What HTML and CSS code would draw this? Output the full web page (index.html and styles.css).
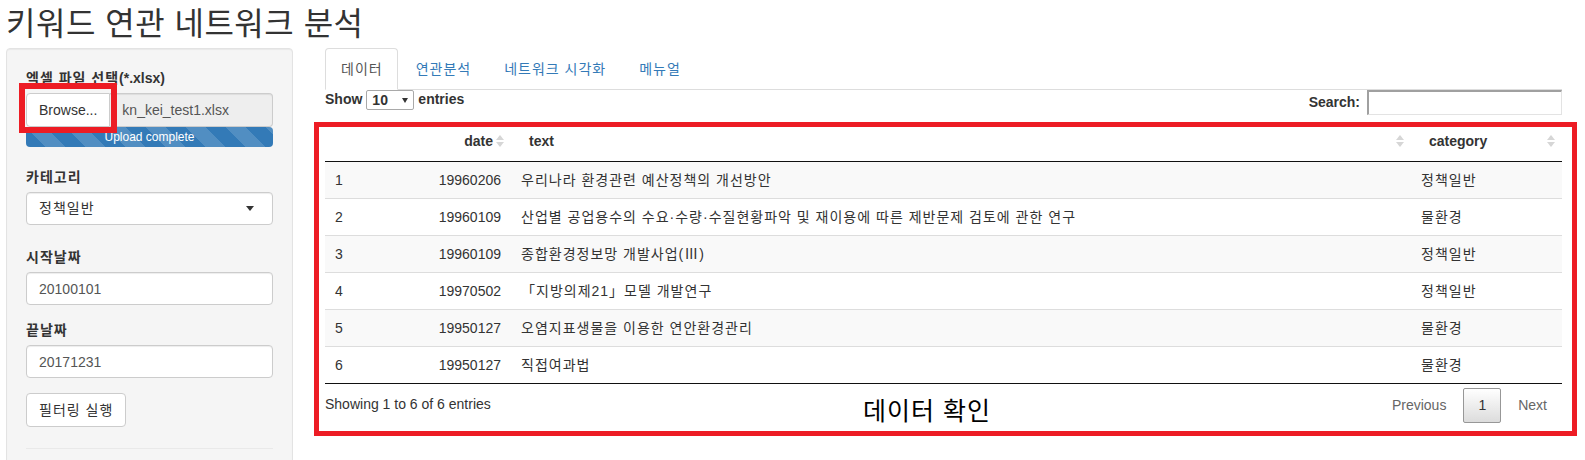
FILE: index.html
```html
<!DOCTYPE html>
<html lang="ko">
<head>
<meta charset="utf-8">
<title>키워드 연관 네트워크 분석</title>
<link rel="stylesheet" href="styles.css">
</head>
<body>
<div class="page">
  <h2 class="title">키워드 연관 네트워크 분석</h2>
  <div class="layout">
    <aside class="well">
      <div class="form-group file-group">
        <label class="control-label"><span class="ko">엑셀 파일 선택</span>(*.xlsx)</label>
        <div class="input-group">
          <span class="btn btn-browse">Browse...</span>
          <input class="form-control readonly" type="text" value="kn_kei_test1.xlsx" readonly>
          <span class="mark mark-browse"></span>
        </div>
        <div class="progress"><div class="progress-bar">Upload complete</div></div>
      </div>
      <div class="form-group select-group">
        <label class="control-label ko">카테고리</label>
        <div class="selectize"><span class="ko">정책일반</span><span class="caret"></span></div>
      </div>
      <div class="form-group">
        <label class="control-label ko">시작날짜</label>
        <input class="form-control" type="text" value="20100101">
      </div>
      <div class="form-group">
        <label class="control-label ko">끝날짜</label>
        <input class="form-control" type="text" value="20171231">
      </div>
      <button class="btn btn-filter ko" type="button">필터링 실행</button>
      <hr class="divider">
    </aside>
    <main class="main">
      <ul class="nav-tabs">
        <li class="tab active"><a class="tab-link ko" href="#">데이터</a></li>
        <li class="tab"><a class="tab-link ko" href="#">연관분석</a></li>
        <li class="tab"><a class="tab-link ko" href="#">네트워크 시각화</a></li>
        <li class="tab"><a class="tab-link ko" href="#">메뉴얼</a></li>
      </ul>
      <div class="dt-wrap">
        <div class="dt-top">
          <div class="dt-length">Show <span class="len-select"><span>10</span><span class="len-caret"></span></span> entries</div>
          <div class="dt-filter">Search:<input class="dt-search" type="search"></div>
        </div>
        <table class="dt">
          <colgroup>
            <col class="c-idx"><col class="c-date"><col><col class="c-cat">
          </colgroup>
          <thead>
            <tr>
              <th class="th"></th>
              <th class="th right">date<svg class="sort" viewBox="0 0 8 14"><path d="M0 6L4 1L8 6Z"/><path d="M0 8L8 8L4 13Z"/></svg></th>
              <th class="th">text<svg class="sort" viewBox="0 0 8 14"><path d="M0 6L4 1L8 6Z"/><path d="M0 8L8 8L4 13Z"/></svg></th>
              <th class="th">category<svg class="sort" viewBox="0 0 8 14"><path d="M0 6L4 1L8 6Z"/><path d="M0 8L8 8L4 13Z"/></svg></th>
            </tr>
          </thead>
          <tbody>
            <tr class="row"><td class="td">1</td><td class="td right">19960206</td><td class="td ko">우리나라 환경관련 예산정책의 개선방안</td><td class="td ko">정책일반</td></tr>
            <tr class="row"><td class="td">2</td><td class="td right">19960109</td><td class="td ko">산업별 공업용수의 수요·수량·수질현황파악 및 재이용에 따른 제반문제 검토에 관한 연구</td><td class="td ko">물환경</td></tr>
            <tr class="row"><td class="td">3</td><td class="td right">19960109</td><td class="td ko">종합환경정보망 개발사업(Ⅲ)</td><td class="td ko">정책일반</td></tr>
            <tr class="row"><td class="td">4</td><td class="td right">19970502</td><td class="td ko">「지방의제21」모델 개발연구</td><td class="td ko">정책일반</td></tr>
            <tr class="row"><td class="td">5</td><td class="td right">19950127</td><td class="td ko">오염지표생물을 이용한 연안환경관리</td><td class="td ko">물환경</td></tr>
            <tr class="row"><td class="td">6</td><td class="td right">19950127</td><td class="td ko">직접여과법</td><td class="td ko">물환경</td></tr>
          </tbody>
        </table>
        <div class="dt-bottom">
          <div class="dt-info">Showing 1 to 6 of 6 entries</div>
          <div class="dt-paginate">
            <span class="pg disabled">Previous</span>
            <span class="pg current">1</span>
            <span class="pg disabled">Next</span>
          </div>
        </div>
        <div class="mark mark-table"></div>
        <div class="caption">데이터 확인</div>
      </div>
    </main>
  </div>
</div>
</body>
</html>
```
FILE: styles.css
```css
* { box-sizing: border-box; }
html, body { margin: 0; padding: 0; }
body {
  font-family: "Liberation Sans", "Noto Sans CJK KR", sans-serif;
  font-size: 14px;
  line-height: 1.42857;
  color: #333;
  background: #fff;
}
.ko { letter-spacing: 1px; }
.page {
  height: 460px;
  overflow: hidden;
  padding: 0 23px 0 6px;
}
.title {
  margin: 0;
  height: 48px;
  padding-top: 4px;
  font-size: 32px;
  line-height: 40px;
  font-weight: 400;
  letter-spacing: 0.5px;
  color: #333;
}
.layout {
  display: flex;
  gap: 32px;
  align-items: flex-start;
}
.well {
  flex: 0 0 287px;
  width: 287px;
  min-width: 0;
  min-height: 460px;
  padding: 19px;
  background: #f5f5f5;
  border: 1px solid #e3e3e3;
  border-radius: 4px;
  box-shadow: inset 0 1px 1px rgba(0,0,0,.05);
}
.main { flex: 1 1 auto; min-width: 0; }

.control-label {
  display: block;
  font-weight: 700;
  margin-bottom: 5px;
  line-height: 20px;
}
.form-group { margin-bottom: 15px; }
.file-group { margin-bottom: 20px; }
.select-group { margin-bottom: 22px; }

.input-group {
  position: relative;
  display: flex;
  height: 34px;
}
.btn {
  display: inline-flex;
  align-items: center;
  justify-content: center;
  padding: 6px 12px;
  border: 1px solid #ccc;
  background: #fff;
  color: #333;
  border-radius: 4px;
  font: inherit;
  line-height: 20px;
  white-space: nowrap;
}
.btn-browse { border-radius: 4px 0 0 4px; height: 34px; flex: none; }
.btn-filter { height: 34px; letter-spacing: 1px; }
.form-control {
  display: block;
  width: 100%;
  min-width: 0;
  height: 33px;
  padding: 6px 12px;
  font: inherit;
  color: #555;
  background: #fff;
  border: 1px solid #ccc;
  border-radius: 4px;
  box-shadow: inset 0 1px 1px rgba(0,0,0,.075);
  outline: none;
}
.input-group .form-control {
  flex: 1 1 0;
  width: auto;
  height: 34px;
  border-left: 0;
  border-radius: 0 4px 4px 0;
  background: #eee;
}
.progress {
  height: 20px;
  border-radius: 4px;
  overflow: hidden;
  background: #f5f5f5;
}
.progress-bar {
  height: 100%;
  background-color: #337ab7;
  background-image: linear-gradient(45deg, rgba(255,255,255,.15) 25%, transparent 25%, transparent 50%, rgba(255,255,255,.15) 50%, rgba(255,255,255,.15) 75%, transparent 75%, transparent);
  background-size: 40px 40px;
  color: #fff;
  font-size: 12px;
  line-height: 20px;
  text-align: center;
}
.selectize {
  display: flex;
  align-items: center;
  justify-content: space-between;
  height: 33px;
  padding: 0 18px 0 12px;
  background: #fff;
  border: 1px solid #ccc;
  border-radius: 4px;
  box-shadow: inset 0 1px 1px rgba(0,0,0,.075);
  color: #333;
}
.caret {
  width: 0;
  height: 0;
  border-top: 5px solid #333;
  border-left: 4px solid transparent;
  border-right: 4px solid transparent;
}
.divider {
  margin: 21px 0 0;
  border: 0;
  border-top: 1px solid #e9e9e9;
}

/* tabs */
.nav-tabs {
  display: flex;
  list-style: none;
  margin: 0;
  padding: 0;
  border-bottom: 1px solid #ddd;
}
.tab { margin-bottom: -1px; }
.tab-link {
  display: block;
  padding: 10px 14px 10px 15px;
  margin-right: 2px;
  line-height: 20px;
  border: 1px solid transparent;
  border-radius: 4px 4px 0 0;
  color: #337ab7;
  text-decoration: none;
}
.tab.active .tab-link {
  color: #555;
  background: #fff;
  border-color: #ddd #ddd transparent;
}

/* datatable */
.dt-wrap { position: relative; }
.dt-top {
  display: flex;
  justify-content: space-between;
  align-items: flex-start;
  height: 31px;
}
.dt-length {
  display: flex;
  align-items: center;
  gap: 4px;
  height: 20px;
  font-weight: 700;
}
.len-select {
  display: flex;
  align-items: center;
  justify-content: space-between;
  width: 48px;
  height: 20px;
  padding: 0 5px;
  border: 1px solid #a9a9a9;
  border-radius: 2px;
  background: #fff;
  line-height: 18px;
}
.len-caret {
  width: 0;
  height: 0;
  border-top: 5px solid #333;
  border-left: 3.5px solid transparent;
  border-right: 3.5px solid transparent;
}
.dt-filter {
  display: flex;
  align-items: center;
  font-weight: 700;
  height: 25px;
}
.dt-search {
  margin-left: 7px;
  width: 195px;
  height: 25px;
  padding: 1px 2px;
  border: 1px solid #e3e3e3;
  border-top: 2px solid #a0a0a0;
  border-left: 2px solid #a0a0a0;
  font: inherit;
  font-weight: 400;
  outline: none;
}
.dt {
  width: 100%;
  border-collapse: separate;
  border-spacing: 0;
  table-layout: fixed;
  border-bottom: 1px solid #111;
}
.c-idx { width: 91px; }
.c-date { width: 95px; }
.c-cat { width: 151px; }
.th {
  position: relative;
  padding: 10px 18px;
  font-weight: 700;
  text-align: left;
  border-bottom: 1px solid #111;
  line-height: 20px;
}
.td {
  padding: 8px 10px;
  border-top: 1px solid #ddd;
  line-height: 20px;
  white-space: nowrap;
  overflow: hidden;
}
.row:first-child .td { border-top: 0; }
.row:nth-child(odd) { background: #f9f9f9; }
.right { text-align: right; }
.th.right { text-align: right; }
.sort {
  position: absolute;
  right: 7px;
  top: 50%;
  margin-top: -7px;
  width: 8px;
  height: 14px;
  fill: #d6d6d6;
}
.dt-bottom {
  display: flex;
  justify-content: space-between;
  align-items: flex-start;
}
.dt-info { padding-top: 0.755em; }
.dt-paginate { display: flex; padding-top: 0.25em; }
.pg {
  display: inline-block;
  min-width: 1.5em;
  padding: 0.5em 1em;
  margin-left: 2px;
  border: 1px solid transparent;
  border-radius: 2px;
  color: #666;
  text-align: center;
}
.pg.current {
  color: #333;
  border-color: #979797;
  background: linear-gradient(to bottom, #fff 0%, #dcdcdc 100%);
}

/* annotations */
.mark {
  position: absolute;
  border: 5px solid #ed1c24;
  pointer-events: none;
}
.mark-browse {
  left: -7px;
  top: -10px;
  width: 98px;
  height: 50px;
  border-width: 6px;
}
.mark-table {
  left: -11px;
  top: 32px;
  width: 1263px;
  height: 314px;
}
.caption {
  position: absolute;
  left: 538px;
  top: 309px;
  font-size: 25px;
  line-height: 24px;
  letter-spacing: 1px;
  color: #000;
  white-space: nowrap;
}
```
